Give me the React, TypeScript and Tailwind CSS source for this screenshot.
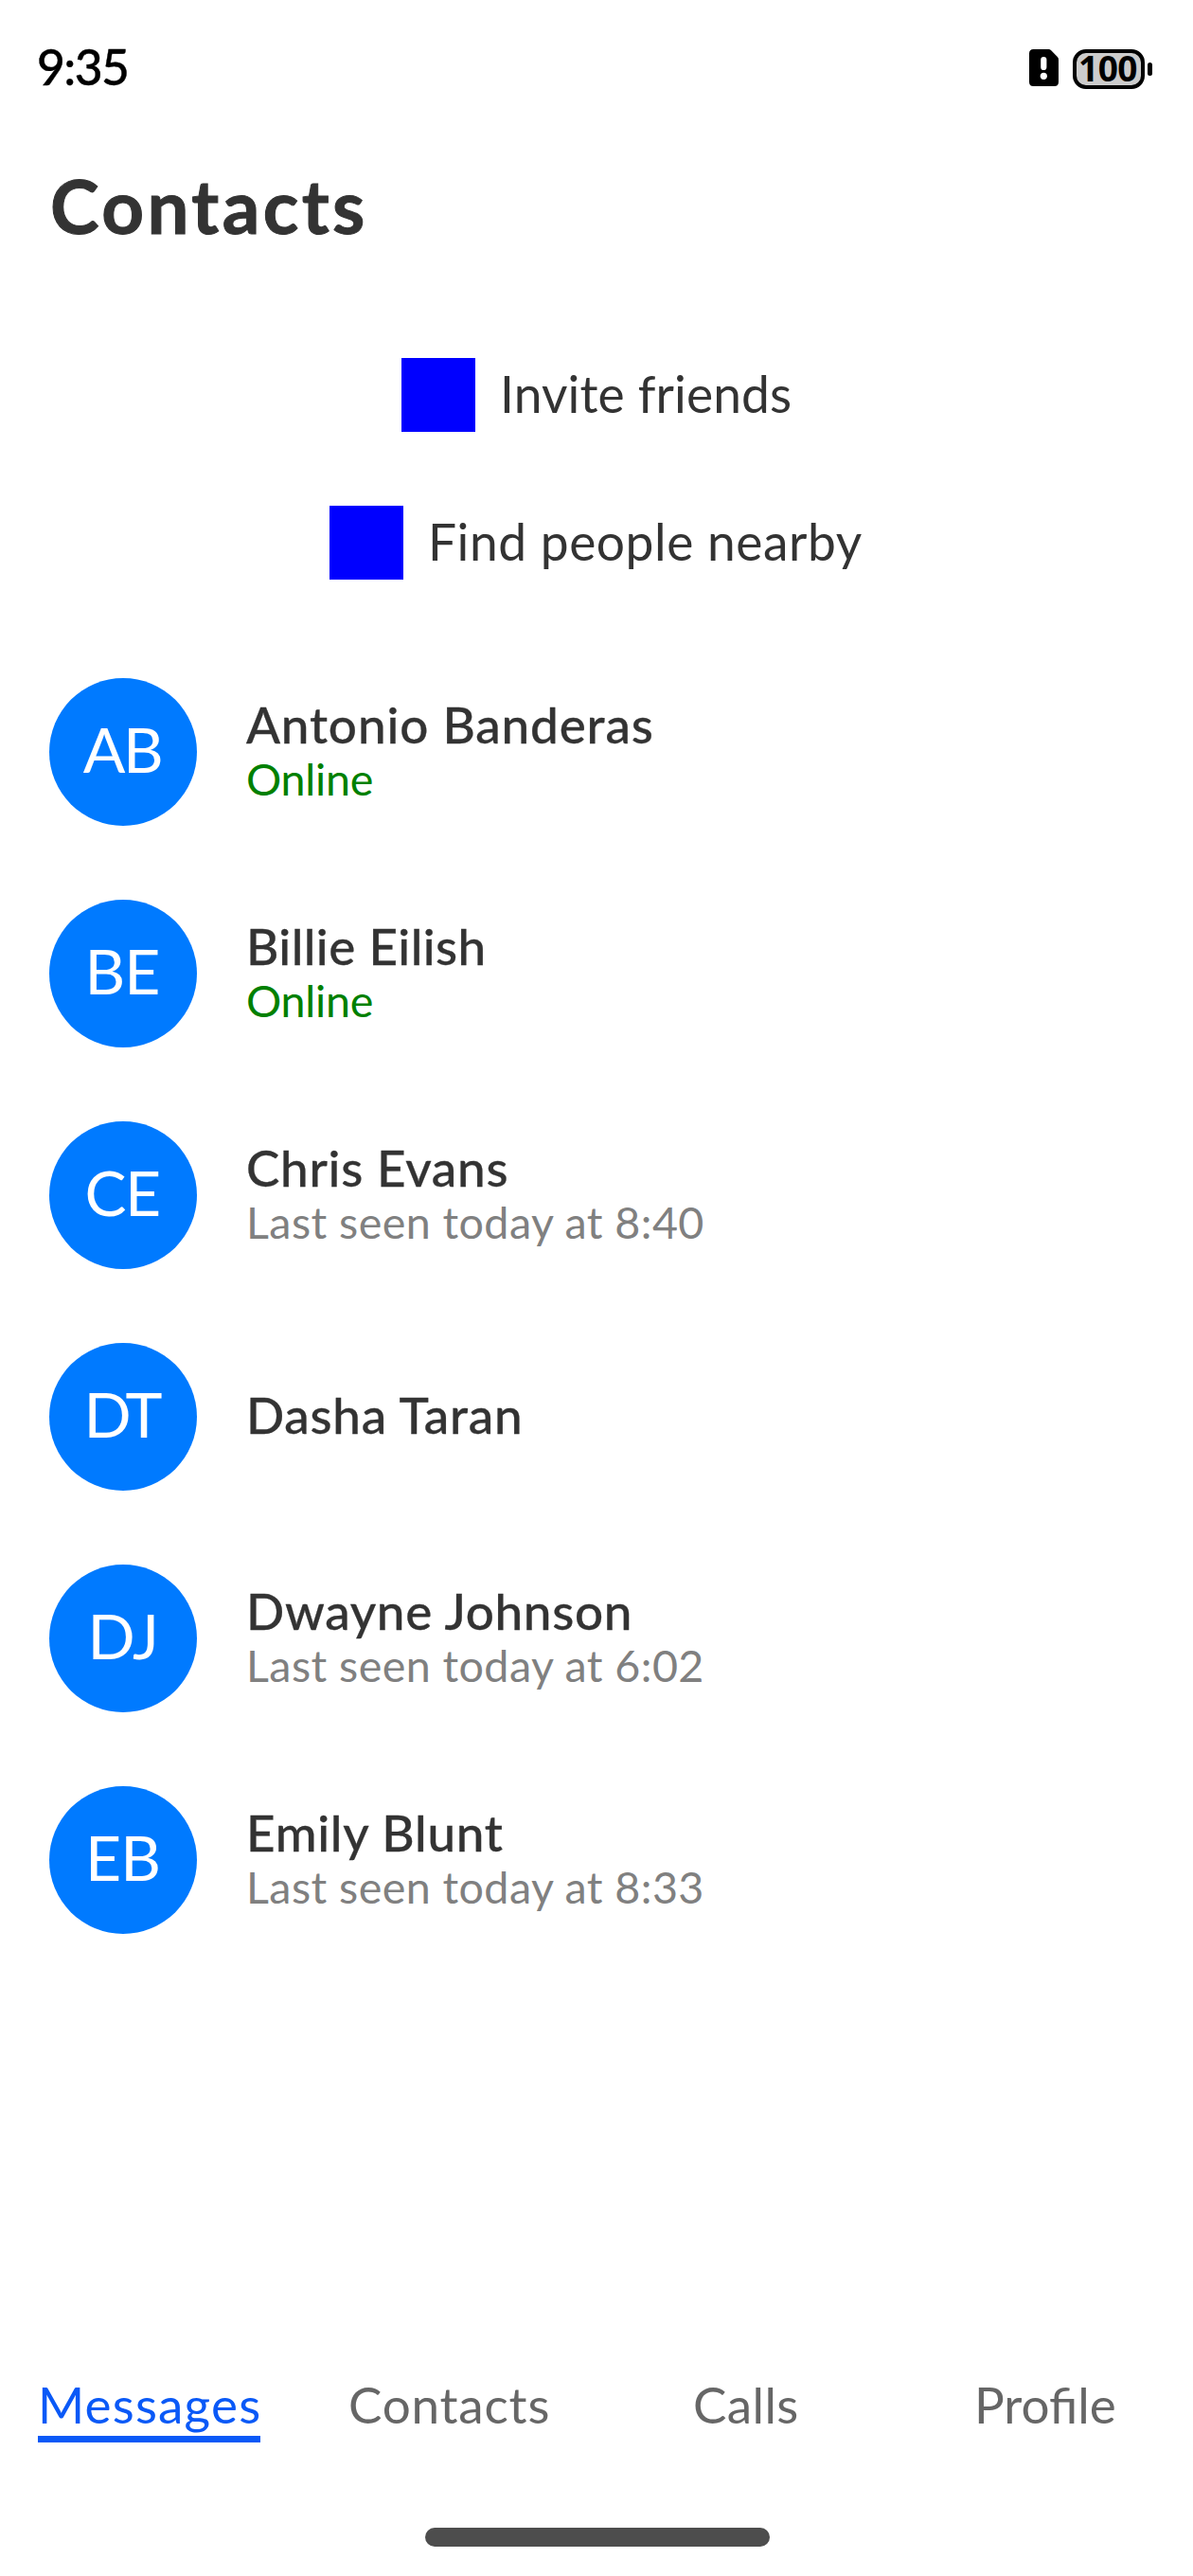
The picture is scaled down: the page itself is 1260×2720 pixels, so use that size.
type Contact = {
  initials: string;
  initialsClass: string;
  name: string;
  nameClass: string;
  status?: string;
};

const contacts: Contact[] = [
  { initials: "AB", initialsClass: "pr-[2px] tracking-[-2.5px]", name: "Antonio Banderas", nameClass: "tracking-[0.85px]", status: "Online" },
  { initials: "BE", initialsClass: "pr-[2px] tracking-[-1px]", name: "Billie Eilish", nameClass: "tracking-[0.42px]", status: "Online" },
  { initials: "CE", initialsClass: "pr-[2px] tracking-[-1.5px]", name: "Chris Evans", nameClass: "tracking-[0.72px]", status: "Last seen today at 8:40" },
  { initials: "DT", initialsClass: "pr-[4px] tracking-[-4px]", name: "Dasha Taran", nameClass: "tracking-[0.75px]" },
  { initials: "DJ", initialsClass: "tracking-[-0.4px]", name: "Dwayne Johnson", nameClass: "tracking-[0.68px]", status: "Last seen today at 6:02" },
  { initials: "EB", initialsClass: "pr-[1px] tracking-[-1px]", name: "Emily Blunt", nameClass: "tracking-[0.75px]", status: "Last seen today at 8:33" },
];

const actions = [
  { label: "Invite friends", className: "w-[308px] tracking-[0.13px]" },
  { label: "Find people nearby", className: "w-[460px] tracking-[0.54px]" },
];

const tabs = [
  { label: "Messages", className: "w-[235px] tracking-[1.2px]", active: true },
  { label: "Contacts", className: "w-[209px] tracking-[0.8px]", active: false },
  { label: "Calls", className: "w-[111px] tracking-[0.4px]", active: false },
  { label: "Profile", className: "w-[147px] tracking-[0px]", active: false },
];

function StatusBar() {
  return (
    <header className="flex h-[140px] items-center justify-between pr-[43px] pl-[39px]">
      <span className="text-[51.5px] leading-[62px] font-medium tracking-[-1.54px] text-black [-webkit-text-stroke:0.4px_#000]">
        9:35
      </span>
      <div className="flex items-center pt-[5px]">
        <svg className="mr-[15px] mb-[2px] h-[39px] w-[31px]" viewBox="0 0 31 39">
          <path d="M4.5 0H20.5Q22 0 23.2 1.2L29.8 8Q31 9.2 31 11V34.5Q31 39 26.5 39H4.5Q0 39 0 34.5V4.5Q0 0 4.5 0Z" fill="#000" />
          <rect x="12.2" y="8" width="6.2" height="14" rx="3.1" fill="#fff" />
          <circle cx="15.3" cy="28.3" r="3.6" fill="#fff" />
        </svg>
        <div className="flex h-[42px] w-[76px] items-center justify-center rounded-[14px] border-[4px] border-black bg-[#cccccc] pr-[2px] pb-[2px] font-['Noto_Sans'] text-[37px] leading-[34px] font-bold tracking-[-0.5px] text-black">
          100
        </div>
        <div className="ml-[2.5px] h-[14px] w-[5.5px] rounded-full bg-black" />
      </div>
    </header>
  );
}

function ContactRow({ contact }: { contact: Contact }) {
  return (
    <li className="flex h-[156px] items-center">
      <div className="flex size-[156px] items-center justify-center rounded-full bg-[#007aff] pb-[7px]">
        <span className={`text-[66px] leading-[80px] text-white ${contact.initialsClass}`}>{contact.initials}</span>
      </div>
      <div className="ml-[52px] pb-[5px] whitespace-nowrap">
        <div className={`text-[53px] leading-[61px] font-medium text-[#333333] [-webkit-text-stroke:0.3px_#333] ${contact.nameClass}`}>
          {contact.name}
        </div>
        {contact.status && (
          <div
            className={
              contact.status === "Online"
                ? "text-[46.6px] leading-[54px] tracking-[-0.25px] text-[#008000]"
                : "text-[46.6px] leading-[54px] tracking-[0.43px] text-[#808080]"
            }
          >
            {contact.status}
          </div>
        )}
      </div>
    </li>
  );
}

export default function App() {
  return (
    <div className="flex h-[2720px] w-[1260px] flex-col overflow-hidden bg-white font-['Lato',sans-serif]">
      <StatusBar />
      <h1 className="h-[238px] pt-[31px] pl-[53px] text-[78px] leading-[92px] font-bold tracking-[3.4px] text-[#333333] [-webkit-text-stroke:1px_#333]">
        Contacts
      </h1>
      <div className="flex flex-col items-center gap-[78px]">
        {actions.map((action) => (
          <button key={action.label} className="flex h-[78px] items-center gap-[26px]">
            <span className="size-[78px] bg-[#0000ff]" />
            <span className={`pb-[5px] text-left text-[53.3px] leading-[64px] whitespace-nowrap text-[#333333] ${action.className}`}>
              {action.label}
            </span>
          </button>
        ))}
      </div>
      <ul className="mt-[104px] flex flex-col gap-[78px] pl-[52px]">
        {contacts.map((contact) => (
          <ContactRow key={contact.name} contact={contact} />
        ))}
      </ul>
      <nav className="mt-auto grid grid-cols-4 justify-items-center">
        {tabs.map((tab) => (
          <div
            key={tab.label}
            className={`text-[53px] leading-[66px] whitespace-nowrap ${tab.className} ${
              tab.active ? "border-b-[7px] border-[#0a59f7] text-[#0a59f7]" : "text-[#666666]"
            }`}
          >
            {tab.label}
          </div>
        ))}
      </nav>
      <div className="mt-[90px] mb-[31px] ml-[449px] h-[20px] w-[364px] rounded-full bg-[#4d4d4d]" />
    </div>
  );
}
